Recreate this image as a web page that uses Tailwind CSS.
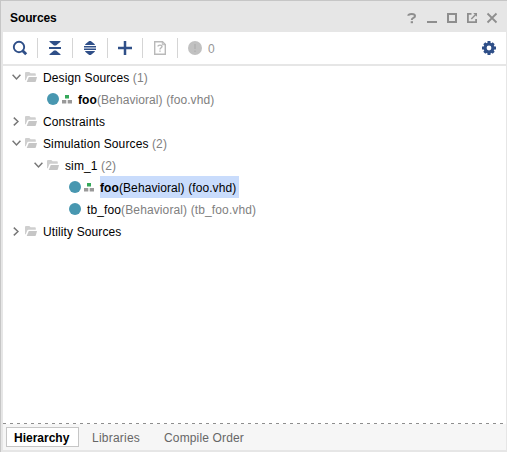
<!DOCTYPE html>
<html lang="en">
<head>
<meta charset="utf-8">
<title>Sources</title>
<script src="https://cdn.jsdelivr.net/npm/@tailwindcss/browser@4"></script>
</head>
<body class="w-[507px] h-[452px] overflow-hidden bg-[#e6e6e6] text-black text-[12px] leading-[22px] font-['Liberation_Sans',Arial,sans-serif] whitespace-nowrap">
<svg class="hidden">
  <symbol id="folder" viewBox="0 0 12 10"><path d="M0 .9Q0 0 1 0H4.3L5.6 1.3H10Q10.8 1.3 10.8 2.2V3.7H3.4Q2.6 3.7 2.3 4.4L.7 8.5 0 8Z" fill="#cfcfcf"/><path d="M3.8 4.9H12L10.9 9.2Q10.7 10 10 10H1.7Z" fill="#c6c6c6"/></symbol>
  <symbol id="down" viewBox="0 0 9 6"><path d="M.6.8 4.5 4.9 8.4.8" fill="none" stroke="#777" stroke-width="1.5"/></symbol>
  <symbol id="right" viewBox="0 0 6 9"><path d="M.8.6 5 4.5.8 8.4" fill="none" stroke="#777" stroke-width="1.5"/></symbol>
  <symbol id="top" viewBox="0 0 10 9"><path d="M3 0H7V3.5H3Z" fill="#35a85a"/><path d="M0 5H4.3V8.5H0ZM5.7 5H10V8.5H5.7Z" fill="#999"/></symbol>
</svg>
<div class="flex flex-col h-full border-t border-l border-[#c6c6c6] pl-[2px] pr-px pb-[2px]">
  <header class="h-[31px] shrink-0 flex items-center pl-[7px] pr-[7px]">
    <h1 class="font-bold text-[12px] pt-[2px] tracking-[-0.1px]">Sources</h1>
    <svg class="ml-auto mt-[3px]" width="92" height="12" viewBox="0 0 92 12" fill="none" stroke="#8e8e8e">
      <path d="M1.3 3.8Q1.4 2 4.7 2Q8 2 8 3.9Q8 5.1 6.4 5.8Q4.8 6.5 4.8 8" stroke-width="2"/><path d="M3.7 9.2H6V11.2H3.7Z" fill="#8e8e8e" stroke="none"/>
      <path d="M20 10H30" stroke-width="2"/>
      <path d="M41 2H49V10H41Z" stroke-width="2"/>
      <path d="M64.5 1.8H60.9V10.2H69.1V7" stroke-width="1.8"/><path d="M64.3 6.9 69 2.2" stroke-width="1.4"/><path d="M66.2 1H70V4.8Z" fill="#8e8e8e" stroke="none"/>
      <path d="M80.5 1.5 89.5 10.5M89.5 1.5 80.5 10.5" stroke-width="1.8"/>
    </svg>
  </header>
  <div class="h-[32px] shrink-0 bg-white flex items-center pl-[9px] pr-[10px]">
    <svg width="16" height="16" viewBox="0 0 16 16" fill="none" stroke="#2f4f88"><circle cx="7" cy="7" r="5.2" stroke-width="1.9"/><path d="M10.7 10.7 14.2 14.2" stroke-width="2.8"/></svg>
    <i class="w-px h-5 bg-[#d5d5d5] ml-[9px]"></i>
    <svg class="ml-[11px]" width="12" height="14" viewBox="0 0 12 14" fill="#2f4f88"><path d="M.5 0H11.5V.8L7 4.6H5L.5.8ZM0 6.1H12V7.9H0ZM5 9.4H7L11.5 13.2V14H.5V13.2Z"/></svg>
    <i class="w-px h-5 bg-[#d5d5d5] ml-[11px]"></i>
    <svg class="ml-[11px]" width="12" height="14" viewBox="0 0 12 14" fill="#2f4f88"><path d="M5.2 0H6.8L10.8 3.2V4H1.2V3.2ZM0 5H12V6.4H0ZM0 7.6H12V9H0ZM1.2 10H10.8V10.8L6.8 14H5.2L1.2 10.8Z"/></svg>
    <i class="w-px h-5 bg-[#d5d5d5] ml-[11px]"></i>
    <svg class="ml-[10px]" width="14" height="14" viewBox="0 0 14 14"><path d="M7 0V14M0 7H14" stroke="#2f4f88" stroke-width="2.5"/></svg>
    <i class="w-px h-5 bg-[#d5d5d5] ml-[10px]"></i>
    <svg class="ml-[11px]" width="12" height="14" viewBox="0 0 12 14" fill="none" stroke="#b9b9b9"><path d="M.7.7H8.5L11.3 3.5V13.3H.7Z" stroke-width="1.4"/><path d="M8.3.7V3.7H11.3"/><path d="M4 5.5Q4 4.1 6 4.1T8 5.6Q8 6.4 7 6.9T6 8.6M6 9.4V10.8" stroke-width="1.4"/></svg>
    <i class="w-px h-5 bg-[#d5d5d5] ml-[11px]"></i>
    <svg class="ml-[10px]" width="14" height="14" viewBox="0 0 14 14"><circle cx="7" cy="7" r="7" fill="#c1c1c1"/><path d="M7 3V8M7 9.5V11" stroke="#b2b2b2" stroke-width="1.6"/></svg>
    <span class="ml-[6px] text-[#969696] pt-px">0</span>
    <svg class="ml-auto" width="14" height="14" viewBox="-7 -7 14 14"><g stroke="#2f4f88" stroke-width="3"><path d="M0-7V7M-7 0H7M-4.7-4.7 4.7 4.7M-4.7 4.7 4.7-4.7"/></g><circle r="5.5" fill="#2f4f88"/><circle r="2.4" fill="#fff"/></svg>
  </div>
  <main class="mt-[2px] h-[357px] shrink-0 bg-white text-[#808080] tracking-[0.12px] *:h-[22px] *:flex *:items-center">
    <div class="pl-[9px]"><svg width="9" height="6"><use href="#down"/></svg><svg class="ml-[4px]" width="12" height="10"><use href="#folder"/></svg><span class="ml-[6px] pt-px"><b class="font-normal text-black">Design Sources</b> (1)</span></div>
    <div class="pl-[44px]"><i class="size-[12px] rounded-full bg-[#4897b0]"></i><svg class="ml-[3px] mt-px" width="10" height="9"><use href="#top"/></svg><span class="ml-[6px] pt-px tracking-[0.09px]"><b class="text-black">foo</b>(Behavioral) (foo.vhd)</span></div>
    <div class="pl-[10px]"><svg width="6" height="9"><use href="#right"/></svg><svg class="ml-[6px]" width="12" height="10"><use href="#folder"/></svg><span class="ml-[6px] pt-px text-black">Constraints</span></div>
    <div class="pl-[9px]"><svg width="9" height="6"><use href="#down"/></svg><svg class="ml-[4px]" width="12" height="10"><use href="#folder"/></svg><span class="ml-[6px] pt-px"><b class="font-normal text-black">Simulation Sources</b> (2)</span></div>
    <div class="pl-[31px]"><svg width="9" height="6"><use href="#down"/></svg><svg class="ml-[4px]" width="12" height="10"><use href="#folder"/></svg><span class="ml-[6px] pt-px"><b class="font-normal text-black">sim_1</b> (2)</span></div>
    <div class="pl-[66px]"><i class="size-[12px] rounded-full bg-[#4897b0]"></i><svg class="ml-[3px] mt-px" width="10" height="9"><use href="#top"/></svg><span class="ml-[6px] w-[139px] h-[22px] pt-px bg-[#c9dcfc] text-black tracking-[0.09px]"><b>foo</b>(Behavioral) (foo.vhd)</span></div>
    <div class="pl-[66px]"><i class="size-[12px] rounded-full bg-[#4897b0]"></i><span class="ml-[6px] pt-px tracking-[0.12px]"><b class="font-normal text-black">tb_foo</b>(Behavioral) (tb_foo.vhd)</span></div>
    <div class="pl-[10px]"><svg width="6" height="9"><use href="#right"/></svg><svg class="ml-[6px]" width="12" height="10"><use href="#folder"/></svg><span class="ml-[6px] pt-px text-black">Utility Sources</span></div>
  </main>
  <div class="h-px shrink-0 bg-[repeating-linear-gradient(90deg,#8e8e8e_0_3px,#fff_3px_7px)]"></div>
  <footer class="h-[26px] shrink-0 bg-[#f6f6f6] flex items-start pt-[3px] pl-[3px] text-[#666]">
    <div class="w-[73px] h-[20px] border border-[#c6c6c6] bg-white text-black font-bold leading-[20px] pl-[7px]">Hierarchy</div>
    <span class="ml-[13px] w-[72px] leading-[22px] tracking-[0.22px]">Libraries</span>
    <span class="leading-[22px] tracking-[0.15px]">Compile Order</span>
  </footer>
</div>
</body>
</html>
